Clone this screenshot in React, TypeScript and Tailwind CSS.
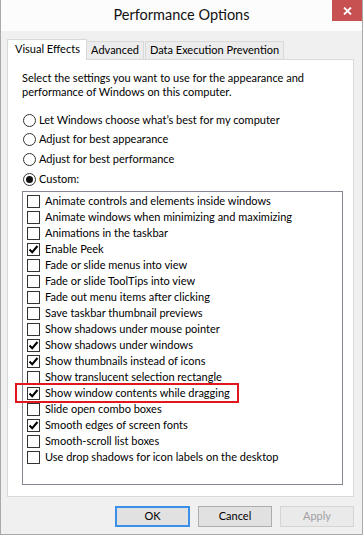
import React from "react";

const items: { label: string; checked: boolean }[] = [
  { label: "Animate controls and elements inside windows", checked: false },
  { label: "Animate windows when minimizing and maximizing", checked: false },
  { label: "Animations in the taskbar", checked: false },
  { label: "Enable Peek", checked: true },
  { label: "Fade or slide menus into view", checked: false },
  { label: "Fade or slide ToolTips into view", checked: false },
  { label: "Fade out menu items after clicking", checked: false },
  { label: "Save taskbar thumbnail previews", checked: false },
  { label: "Show shadows under mouse pointer", checked: false },
  { label: "Show shadows under windows", checked: true },
  { label: "Show thumbnails instead of icons", checked: true },
  { label: "Show translucent selection rectangle", checked: false },
  { label: "Show window contents while dragging", checked: true },
  { label: "Slide open combo boxes", checked: false },
  { label: "Smooth edges of screen fonts", checked: true },
  { label: "Smooth-scroll list boxes", checked: false },
  { label: "Use drop shadows for icon labels on the desktop", checked: false },
];

const radios = [
  { label: "Let Windows choose what\u2019s best for my computer", on: false, h: "h-[20px]" },
  { label: "Adjust for best appearance", on: false, h: "h-[19px]" },
  { label: "Adjust for best performance", on: false, h: "h-[20px]" },
  { label: "Custom:", on: true, h: "h-[20px]" },
];

function Radio({ on }: { on: boolean }) {
  return (
    <span className="w-[13px] h-[13px] rounded-full border border-[#333] bg-white flex items-center justify-center shrink-0">
      {on && <span className="w-[7px] h-[7px] rounded-full bg-[#111]" />}
    </span>
  );
}

function Check({ on }: { on: boolean }) {
  return (
    <span className="w-[13px] h-[13px] border border-[#333] bg-white flex items-center justify-center shrink-0">
      {on && (
        <svg width="11" height="11" viewBox="0 0 11 11">
          <path d="M1.5 5.5 L4.2 8.2 L9.5 2" fill="none" stroke="#000" strokeWidth="2" />
        </svg>
      )}
    </span>
  );
}

export default function App() {
  return (
    <div className="w-[363px] h-[535px] bg-[#f0f0f0] border-x border-b border-[#a9a9a9] flex flex-col relative text-[11px] text-black font-['Lato',sans-serif]">
      {/* Title bar */}
      <div className="h-[31px] bg-[#fcfcfc] flex items-center justify-center text-[14.5px] text-[#111] pb-px">
        Performance Options
      </div>
      <button className="absolute top-0 right-0 w-[30px] h-[21px] bg-[#c75050] flex items-center justify-center">
        <svg width="9" height="8" viewBox="0 0 9 8">
          <path d="M1 0.5 L8 7.5 M8 0.5 L1 7.5" stroke="#fff" strokeWidth="1.8" />
        </svg>
      </button>

      <div className="flex-1 flex flex-col pt-[7px] pl-[6px] pr-[8px]">
        {/* Tabs */}
        <div className="flex items-end h-[21px] whitespace-nowrap">
          <div className="w-[80px] h-[21px] bg-white border border-b-0 border-[#d9d9d9] flex items-center pl-[7px] relative z-10 -mb-px pb-[2px]">
            Visual Effects
          </div>
          <div className="w-[57px] h-[18px] bg-[#ececec] border border-l-0 border-b-0 border-[#d9d9d9] flex items-center justify-center">
            Advanced
          </div>
          <div className="ml-px w-[139px] h-[18px] bg-[#ececec] border border-b-0 border-[#d9d9d9] flex items-center justify-center">
            Data Execution Prevention
          </div>
        </div>

        {/* Panel */}
        <div className="w-[347px] h-[438px] bg-white border border-[#d9d9d9] flex flex-col pl-[14px] pt-[11px]">
          <p className="leading-[14px] w-[310px]">
            Select the settings you want to use for the appearance and performance of Windows on this computer.
          </p>
          <div className="mt-[11px] flex flex-col">
            {radios.map((r) => (
              <div key={r.label} className={`${r.h} flex items-center gap-[3px] pl-px`}>
                <Radio on={r.on} />
                <span>{r.label}</span>
              </div>
            ))}
          </div>
          <div className="mt-[2px] w-[321px] h-[294px] border border-[#828790] bg-white pt-px flex flex-col">
            {items.map((it, i) => (
              <div key={it.label} className="h-[16px] flex items-center gap-[5px] pl-[4px] relative">
                <Check on={it.checked} />
                <span className="whitespace-nowrap">{it.label}</span>
                {i === 12 && (
                  <span className="absolute -top-[2px] -left-[8px] w-[224px] h-[20px] border-2 border-[#e2161d]" />
                )}
              </div>
            ))}
          </div>
        </div>

        {/* Buttons */}
        <div className="flex justify-end gap-[8px] mt-[9px]">
          <button className="w-[75px] h-[21px] bg-[#e1e1e1] border-2 border-[#3b8fe6] flex items-center justify-center">
            OK
          </button>
          <button className="w-[74px] h-[21px] bg-[#e1e1e1] border border-[#adadad] flex items-center justify-center">
            Cancel
          </button>
          <button className="w-[74px] h-[21px] bg-[#eaeaea] border border-[#d5d5d5] text-[#a0a0a0] flex items-center justify-center">
            Apply
          </button>
        </div>
      </div>
    </div>
  );
}
